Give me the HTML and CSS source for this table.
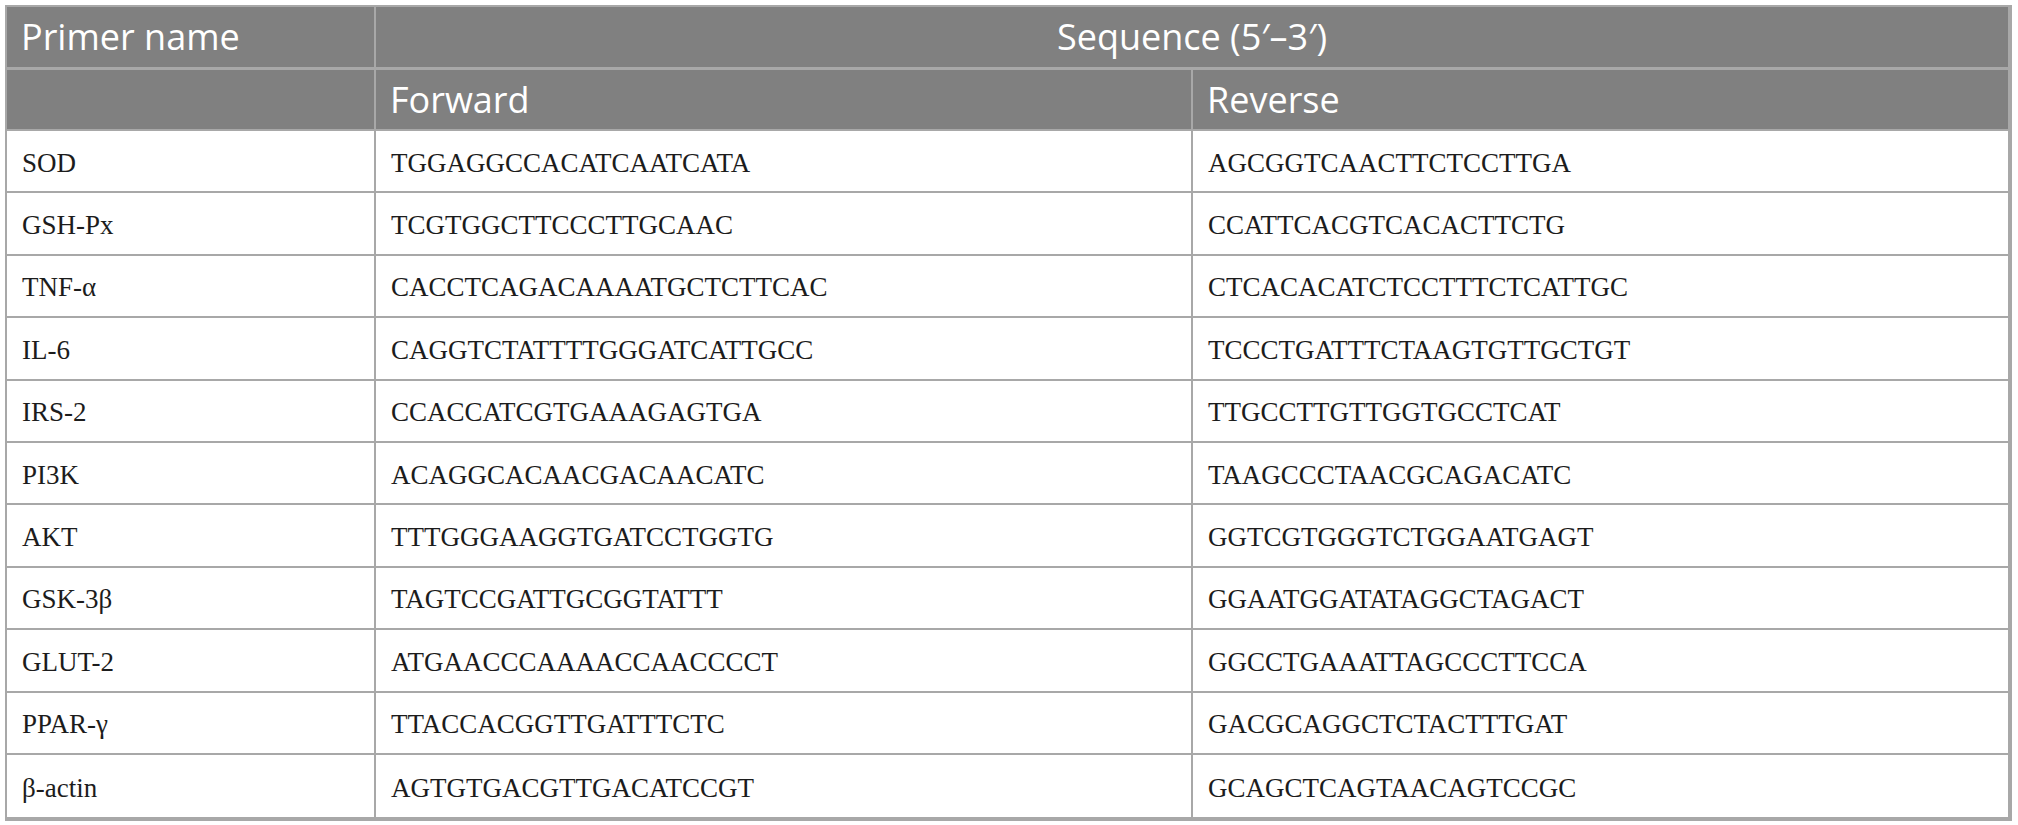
FILE: index.html
```html
<!DOCTYPE html>
<html lang="en">
<head>
<meta charset="utf-8">
<title>Primer sequences</title>
<link rel="stylesheet" href="styles.css">
</head>
<body>
<table class="primers">
  <colgroup>
    <col class="c-name">
    <col class="c-fwd">
    <col class="c-rev">
  </colgroup>
  <thead>
    <tr class="h1">
      <th>Primer name</th>
      <th class="center last" colspan="2">Sequence (5′–3′)</th>
    </tr>
    <tr class="h2">
      <th></th>
      <th>Forward</th>
      <th class="last">Reverse</th>
    </tr>
  </thead>
  <tbody>
    <tr><td>SOD</td><td>TGGAGGCCACATCAATCATA</td><td class="last">AGCGGTCAACTTCTCCTTGA</td></tr>
    <tr><td>GSH-Px</td><td>TCGTGGCTTCCCTTGCAAC</td><td class="last">CCATTCACGTCACACTTCTG</td></tr>
    <tr><td>TNF-α</td><td>CACCTCAGACAAAATGCTCTTCAC</td><td class="last">CTCACACATCTCCTTTCTCATTGC</td></tr>
    <tr><td>IL-6</td><td>CAGGTCTATTTTGGGATCATTGCC</td><td class="last">TCCCTGATTTCTAAGTGTTGCTGT</td></tr>
    <tr><td>IRS-2</td><td>CCACCATCGTGAAAGAGTGA</td><td class="last">TTGCCTTGTTGGTGCCTCAT</td></tr>
    <tr><td>PI3K</td><td>ACAGGCACAACGACAACATC</td><td class="last">TAAGCCCTAACGCAGACATC</td></tr>
    <tr><td>AKT</td><td>TTTGGGAAGGTGATCCTGGTG</td><td class="last">GGTCGTGGGTCTGGAATGAGT</td></tr>
    <tr><td>GSK-3β</td><td>TAGTCCGATTGCGGTATTT</td><td class="last">GGAATGGATATAGGCTAGACT</td></tr>
    <tr><td>GLUT-2</td><td>ATGAACCCAAAACCAACCCCT</td><td class="last">GGCCTGAAATTAGCCCTTCCA</td></tr>
    <tr><td>PPAR-γ</td><td>TTACCACGGTTGATTTCTC</td><td class="last">GACGCAGGCTCTACTTTGAT</td></tr>
    <tr class="final"><td>β-actin</td><td>AGTGTGACGTTGACATCCGT</td><td class="last">GCAGCTCAGTAACAGTCCGC</td></tr>
  </tbody>
</table>
</body>
</html>
```

FILE: styles.css
```css
html, body {
  margin: 0;
  padding: 0;
  background: #ffffff;
}

body {
  padding: 5px 0 0 5px;
}

.primers {
  border-collapse: separate;
  border-spacing: 0;
  table-layout: fixed;
  width: 2007px;
  border-style: solid;
  border-color: #a8a8a8;
  border-width: 2px 4px 4px 2px;
}

.c-name { width: 369px; }
.c-fwd { width: 817px; }
.c-rev { width: 815px; }

.primers th,
.primers td {
  border-right: 2px solid #a8a8a8;
  border-bottom: 2px solid #a8a8a8;
  padding: 0 0 0 15px;
  text-align: left;
  vertical-align: middle;
  white-space: nowrap;
}

.primers .last {
  border-right: none;
}

.primers th {
  background: #808080;
  color: #ffffff;
  font-family: "Open Sans", "Noto Sans", sans-serif;
  font-weight: 400;
  font-size: 36px;
  line-height: 1.2;
  padding-left: 14px;
}

.primers th.center {
  text-align: center;
  padding-left: 0;
}

.h1 th { height: 60px; border-bottom-width: 3px; }
.h2 th { height: 59px; }

.primers td {
  height: 56.4px;
  font-family: "Liberation Serif", "Times New Roman", serif;
  font-size: 27px;
  line-height: 1.15;
  color: #1c1c1c;
  padding-top: 4px;
}

.primers tr.final td {
  border-bottom: none;
  height: 58.4px;
}
```
